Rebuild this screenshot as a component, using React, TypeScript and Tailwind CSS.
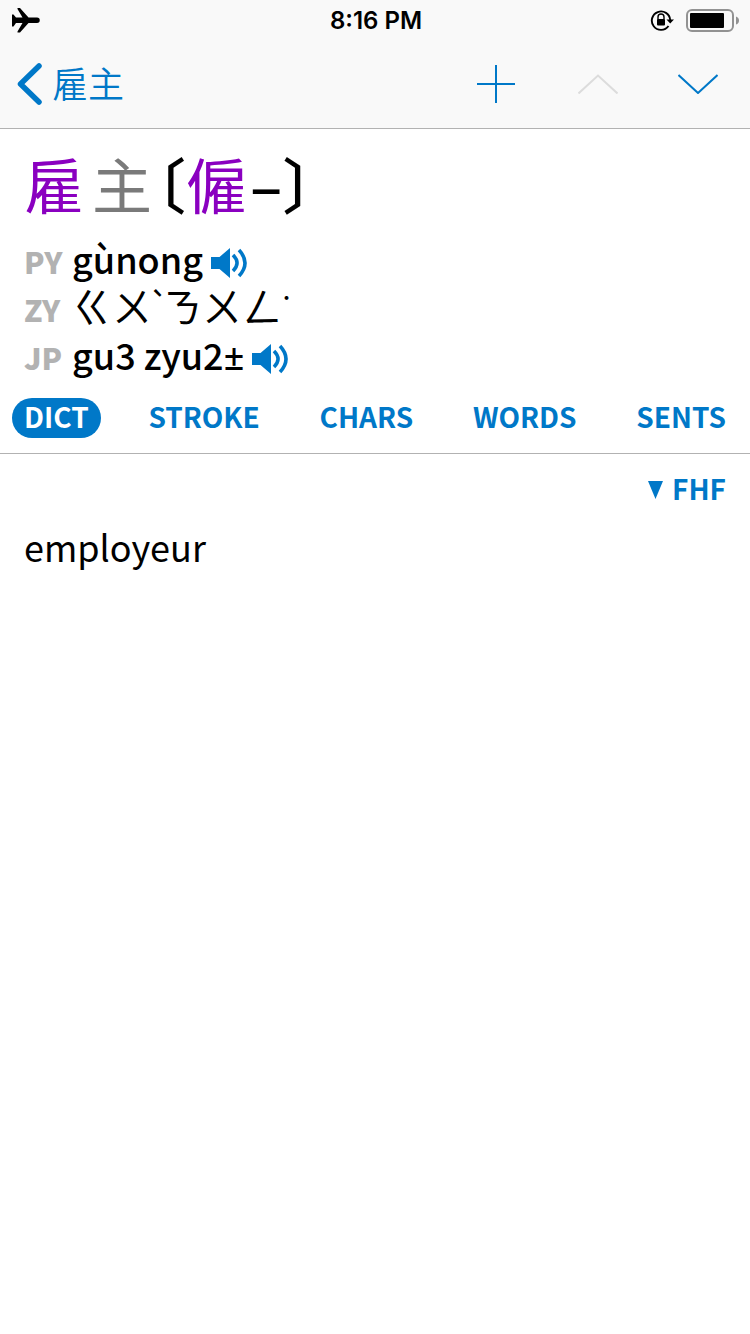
import { useState } from 'react';

const TABS = ['DICT', 'STROKE', 'CHARS', 'WORDS', 'SENTS'];

function StatusBar() {
  return (
    <div className="grid h-10 grid-cols-3 items-center pt-px pr-2.5 pl-3">
      <svg width="28" height="26" viewBox="0 0 28 26" aria-hidden="true">
        <path
          d="M0 6.500h1.500L4 9.500h6.500L5.500 1V0H8l8.500 9.500h8.500a2.500 2.500 0 0 1 0 5.500h-8.500L8 24.500H5.500v-1L10.500 15H4l-2.500 3.500H0z"
          fill="#000"
        />
      </svg>
      <span className="justify-self-center whitespace-nowrap font-['Inter',sans-serif] text-2xl font-semibold text-black">
        8:16 PM
      </span>
      <div className="flex items-center gap-3 justify-self-end">
        <svg width="24" height="24" viewBox="0 0 24 24" fill="none" aria-hidden="true">
          <path d="M18.500 17A9.200 9.200 0 1 1 20.200 11" stroke="#000" strokeWidth="1.900" />
          <path d="M16.500 10.500h7.500l-3.800 4z" fill="#000" />
          <path d="M8 10.500V8a3 3 0 0 1 6 0v2.500" stroke="#000" strokeWidth="1.400" />
          <rect x="7" y="10" width="8" height="6.500" rx="1" fill="#000" />
        </svg>
        <svg width="54" height="24" viewBox="0 0 54 24" fill="none" aria-hidden="true">
          <rect x="1" y="1" width="46" height="21" rx="5" stroke="#929292" strokeWidth="2" />
          <rect x="4" y="4" width="34" height="15" rx="1" fill="#000" />
          <path d="M50 7.500q3 1 3 4t-3 4z" fill="#929292" />
        </svg>
      </div>
    </div>
  );
}

function NavBar() {
  return (
    <nav className="flex h-22 items-center justify-between pr-8 pl-4">
      <a href="#back" className="flex items-center gap-2 text-4xl font-[350]">
        <svg width="28" height="44" viewBox="0 0 28 44" fill="none" aria-hidden="true">
          <path d="M23 4L4.500 22L23 40" stroke="currentColor" strokeWidth="5.500" strokeLinecap="round" strokeLinejoin="round" />
        </svg>
        <span className="pb-1">雇主</span>
      </a>
      <div className="flex items-center gap-15">
        <button type="button" aria-label="Add">
          <svg width="44" height="40" viewBox="0 0 44 40" fill="none" aria-hidden="true">
            <path d="M22 1v38M3 20h38" stroke="currentColor" strokeWidth="2" />
          </svg>
        </button>
        <button type="button" aria-label="Previous entry" disabled className="text-[#dcdcdc]">
          <svg width="40" height="20" viewBox="0 0 40 20" fill="none" aria-hidden="true">
            <path d="M.5 19.500L20 1.500L39.500 19.500" stroke="currentColor" strokeWidth="2" />
          </svg>
        </button>
        <button type="button" aria-label="Next entry">
          <svg width="40" height="20" viewBox="0 0 40 20" fill="none" aria-hidden="true">
            <path d="M.5 1L20 19L39.500 1" stroke="currentColor" strokeWidth="2" />
          </svg>
        </button>
      </div>
    </nav>
  );
}

function Speaker() {
  return (
    <button type="button" aria-label="Play audio" className="mt-2.5 text-[#0078c8]">
      <svg width="38" height="32" viewBox="0 0 38 32" fill="none" aria-hidden="true">
        <path d="M0 10h8.500L19 1v30L8.500 22H0z" fill="currentColor" />
        <path d="M22 8q8 8 0 16" stroke="currentColor" strokeWidth="3.500" />
        <path d="M28 3q12 13 0 26" stroke="currentColor" strokeWidth="3.500" />
      </svg>
    </button>
  );
}

interface ReadingProps {
  label: string;
  children: React.ReactNode;
  hasAudio?: boolean;
}

function Reading({ label, children, hasAudio }: ReadingProps) {
  return (
    <div className="flex h-12 items-start gap-2">
      <span className="w-10 text-3xl leading-12 font-black text-[#b2b2b2]">{label}</span>
      <span className={hasAudio ? 'text-4xl leading-[42px] font-medium' : 'text-[40px] leading-10 font-normal'}>
        {children}
      </span>
      {hasAudio && <Speaker />}
    </div>
  );
}

function Tone({ mark }: { mark: string }) {
  return <span className="inline-block w-2.5 align-top text-lg leading-6 font-black">{mark}</span>;
}

export default function App() {
  const [tab, setTab] = useState('DICT');

  return (
    <div className="min-h-screen bg-white font-['Noto_Sans_CJK_TC',sans-serif] text-black">
      <header className="border-b border-[#b2b2b2] bg-[#f9f9f9] text-[#0078c8]">
        <StatusBar />
        <NavBar />
      </header>

      <section className="border-b border-[#b2b2b2]">
        <div className="px-6 pt-3">
          <h1 className="flex h-22 items-center pb-1 text-[60px] leading-none font-medium">
            <span className="font-normal text-[#8a00c0]">雇</span>
            <span className="pl-2 font-normal text-[#7a7a7a]">主</span>
            <span className="pl-1 [font-feature-settings:'halt']">〔</span>
            <span className="font-normal text-[#8a00c0]">僱</span>
            <span className="pl-1">–</span>
            <span className="[font-feature-settings:'halt']">〕</span>
          </h1>
          <div className="pt-2">
            <Reading label="PY" hasAudio>gùnong</Reading>
            <Reading label="ZY">
              ㄍㄨ<Tone mark="ˋ" />ㄋㄨㄥ<Tone mark="˙" />
            </Reading>
            <Reading label="JP" hasAudio>
              gu3 zyu2<span className="font-['Noto_Sans',sans-serif]">±</span>
            </Reading>
          </div>
        </div>
        <div className="flex items-center justify-between px-3 pt-[17px] pb-[15px]">
          {TABS.map((name) => (
            <button
              key={name}
              type="button"
              onClick={() => setTab(name)}
              className={
                'flex h-10 items-center rounded-full px-3 pb-1 text-[28px] leading-9 font-bold ' +
                (tab === name ? 'bg-[#0078c8] text-white' : 'text-[#0078c8]')
              }
            >
              {name}
            </button>
          ))}
        </div>
      </section>

      <main className="px-6 pt-4">
        <button type="button" className="ml-auto flex h-10 items-center gap-2 text-[28px] font-bold text-[#0078c8]">
          <svg width="16" height="18" viewBox="0 0 16 18" aria-hidden="true">
            <path d="M0 0h15L7.500 18z" fill="currentColor" />
          </svg>
          <span className="pb-1 leading-9">FHF</span>
        </button>
        <p className="pt-3 text-4xl leading-12">employeur</p>
      </main>
    </div>
  );
}
